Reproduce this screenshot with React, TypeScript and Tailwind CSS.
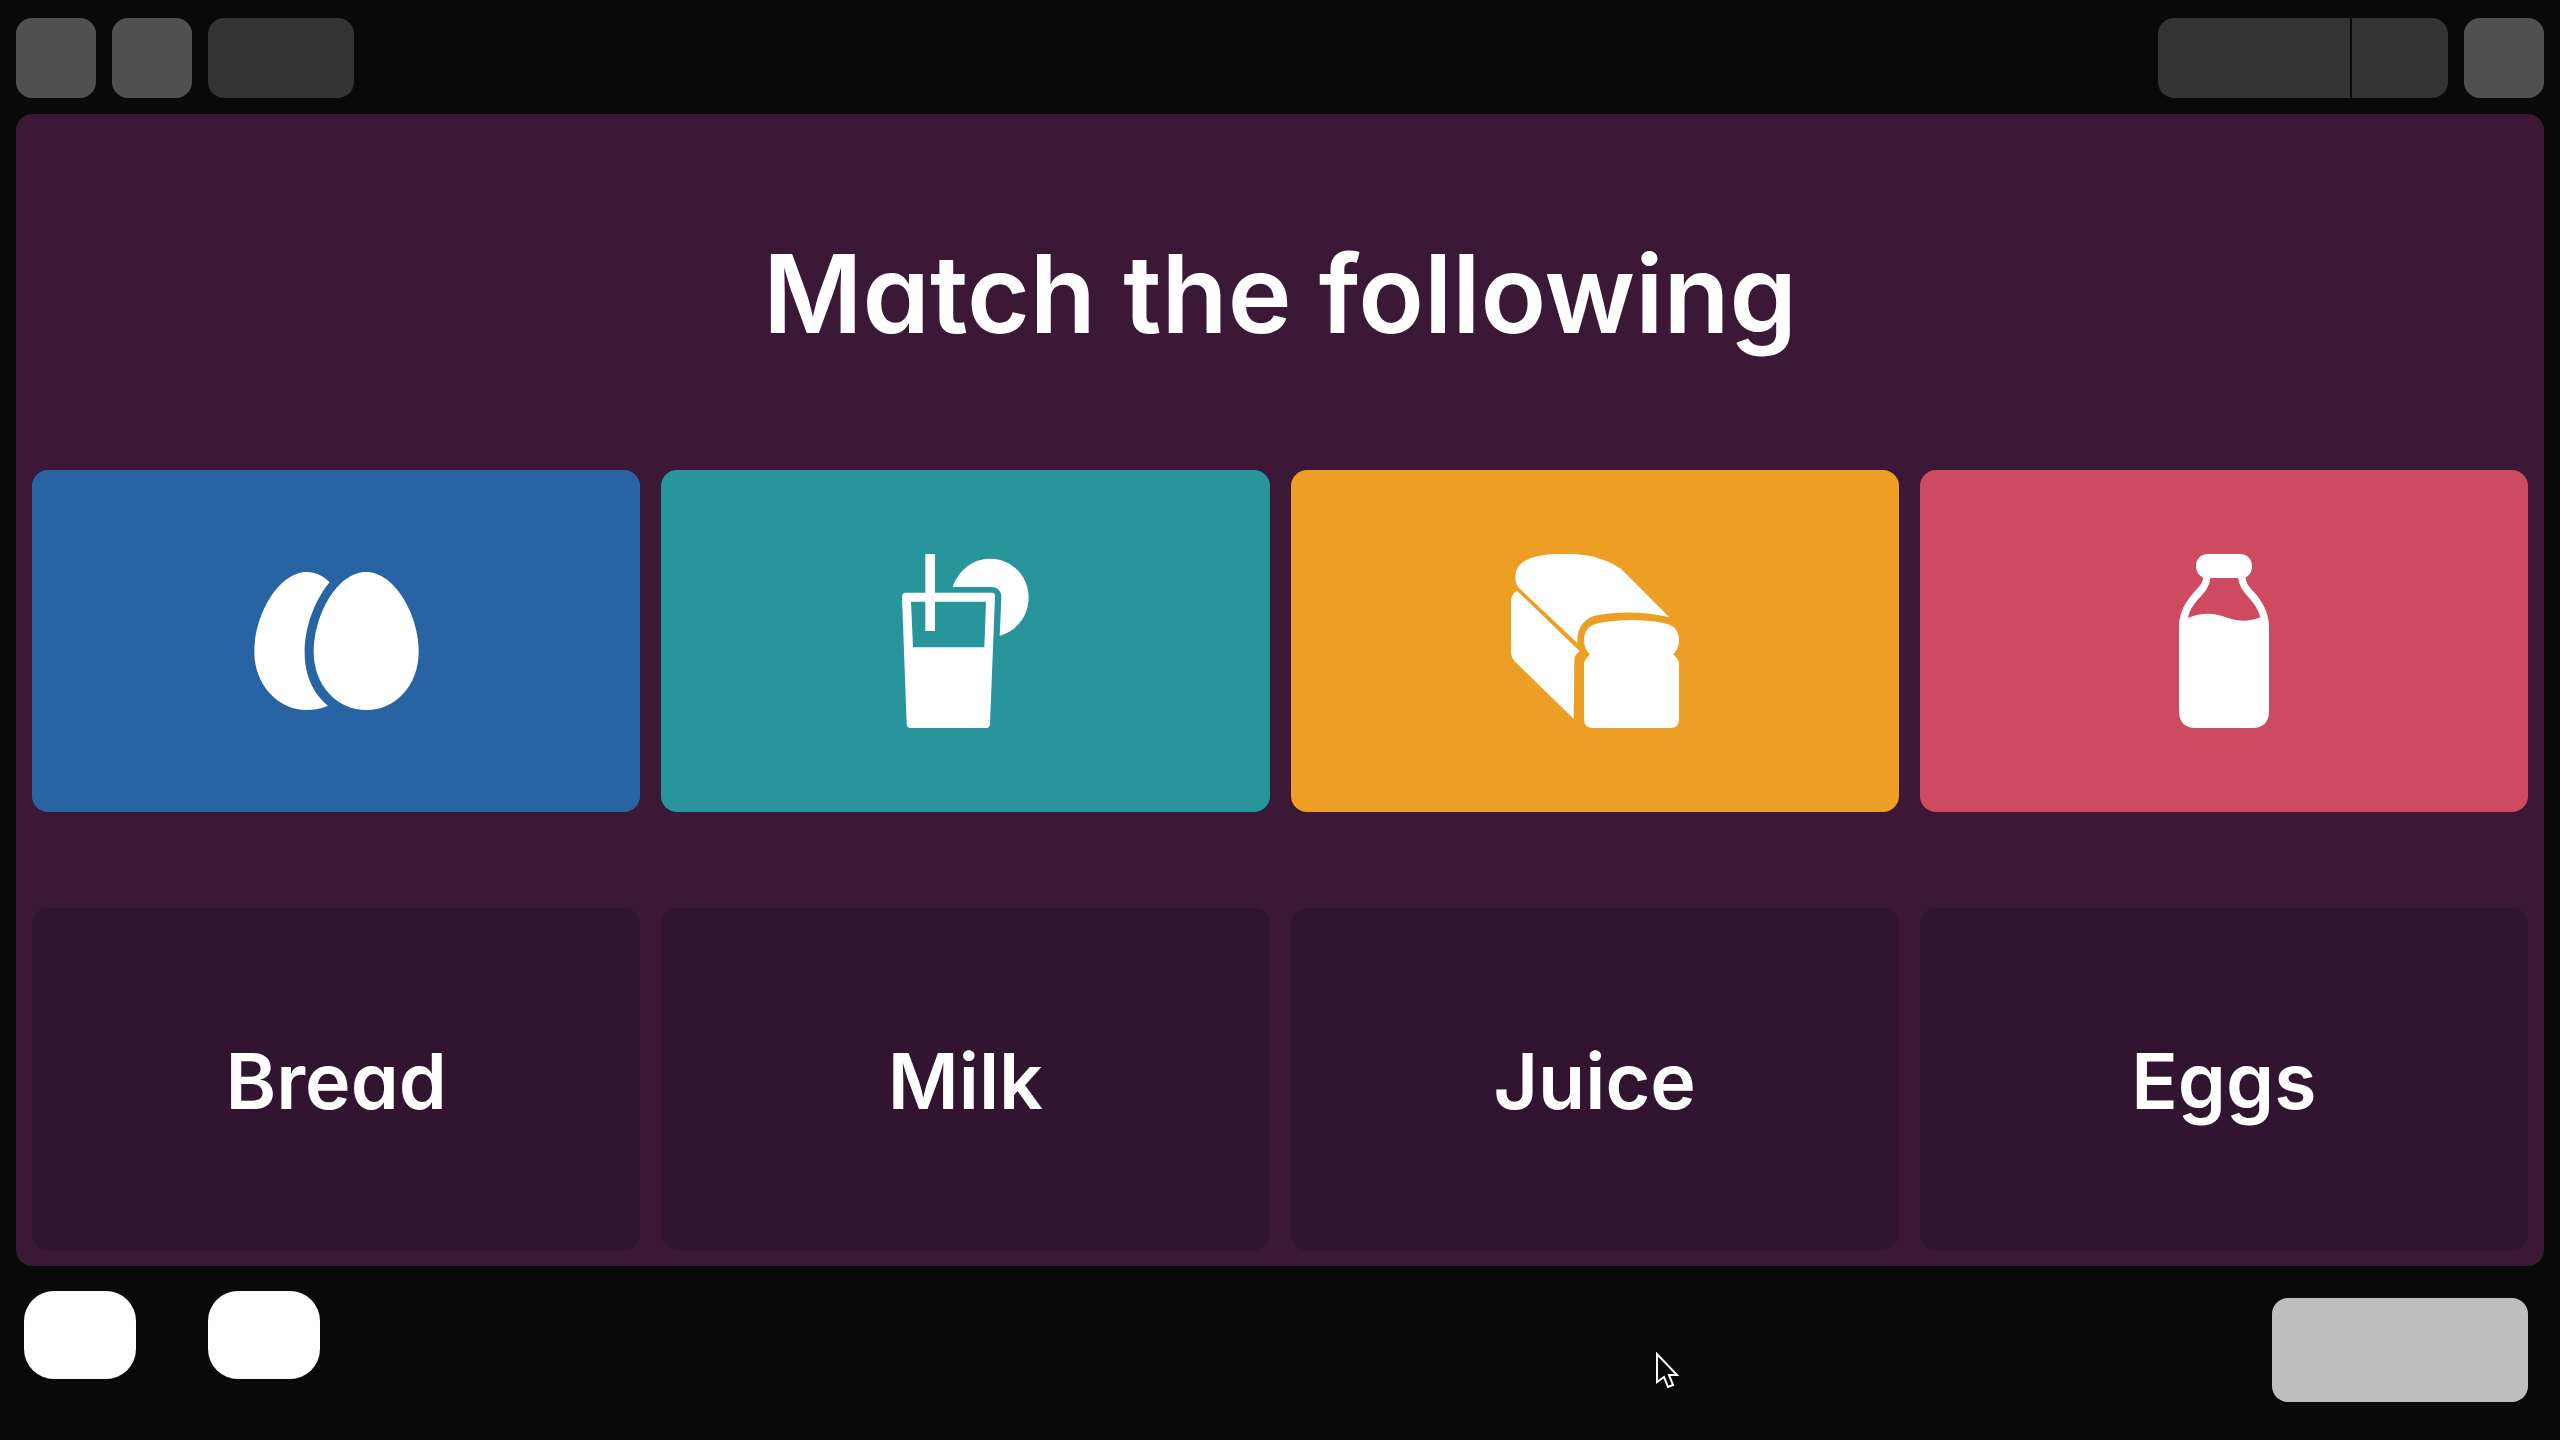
import type { ReactNode } from "react";

function EggsIcon() {
  return (
    <svg viewBox="70 96 495 414" className="h-[138px] w-[165px]" fill="#fff" aria-hidden="true">
      <path d="M297 127C278 108 254 96 229 96C143 96 71 225 71 335C71 438 146 510 228 510C250 510 272 506 292 497C249 462 222 407 222 338C222 264 250 183 297 127Z" />
      <path d="M406 96C492 96 564 225 564 335C564 438 492 510 407 510C321 510 249 438 249 335C249 225 320 96 406 96Z" />
    </svg>
  );
}

function JuiceIcon() {
  return (
    <svg viewBox="66 72 381 522" className="h-[174px] w-[127px]" fill="#fff" aria-hidden="true">
      <path
        fillRule="evenodd"
        d="M136 72H165V188H336Q346 188 345 199L330 583Q329 594 319 594H91Q81 594 80 583L66 200Q66 188 77 188H136ZM93 215L99 352H313L318 215H165V303H136V215Z"
      />
      <path d="M218 171C235 121 278 86 330 86C396 86 446 138 446 203C446 257 410 303 359 318L364 204C365 184 353 171 334 171Z" />
    </svg>
  );
}

function BreadIcon() {
  return (
    <svg viewBox="60 72 504 522" className="h-[174px] w-[168px]" fill="#fff" aria-hidden="true">
      <path d="M75 157C67 123 82 96 123 83C151 75 185 71 222 71C287 71 344 86 385 113C392 118 399 125 405 131L535 262C469 245 385 243 318 256C280 264 257 293 259 339L83 173Q77 167 75 157Z" />
      <path d="M78 182L266 364C256 371 250 378 250 390L248 566L72 395Q60 383 60 367V213Q60 193 78 182Z" />
      <path d="M279 329C279 305 292 287 316 281C382 266 462 266 527 281C551 287 564 305 564 329C564 349 557 362 546 373C558 384 564 391 564 406V568Q564 594 538 594H306Q279 594 279 567V405C279 391 286 385 297 373C286 362 279 349 279 329Z" />
    </svg>
  );
}

function MilkIcon() {
  return (
    <svg viewBox="84 72 270 522" className="h-[174px] w-[90px]" fill="#fff" aria-hidden="true">
      <path
        fillRule="evenodd"
        d="M171 72H267C289 72 303 88 303 108C303 124 296 136 284 142C285 159 294 171 307 184C334 213 354 250 354 290V543Q354 594 303 594H135Q84 594 84 543V290C84 248 104 215 131 184C145 170 154 160 157 143C143 137 135 124 135 108C135 88 149 72 171 72ZM178 144C176 164 168 178 153 195C133 216 116 237 111 264C155 245 194 249 234 265C266 276 299 274 328 262C321 237 308 218 289 198C274 182 264 164 261 144Z"
      />
    </svg>
  );
}

const pictures: { name: string; color: string; icon: ReactNode }[] = [
  { name: "Eggs picture", color: "bg-[#2864a4]", icon: <EggsIcon /> },
  { name: "Juice picture", color: "bg-[#28949c]", icon: <JuiceIcon /> },
  { name: "Bread picture", color: "bg-[#ec9f24]", icon: <BreadIcon /> },
  { name: "Milk picture", color: "bg-[#cd4a60]", icon: <MilkIcon /> },
];

const words = ["Bread", "Milk", "Juice", "Eggs"];

export default function App() {
  return (
    <div className="relative flex min-h-screen flex-col bg-[#090909] px-4 pt-[18px] font-['Inter',sans-serif] text-white [font-feature-settings:'cv11']">
      <header className="flex items-center justify-between">
        <div className="flex gap-4">
          <button aria-label="Menu" className="size-20 rounded-2xl bg-[#505050]" />
          <button aria-label="Full screen" className="size-20 rounded-2xl bg-[#505050]" />
          <button aria-label="Question number" className="h-20 w-[146px] rounded-2xl bg-[#333333]" />
        </div>
        <div className="flex gap-4">
          <div className="flex gap-0.5">
            <button aria-label="Score" className="h-20 w-48 rounded-l-2xl bg-[#333333]" />
            <button aria-label="Streak" className="h-20 w-24 rounded-r-2xl bg-[#333333]" />
          </div>
          <button aria-label="Settings" className="size-20 rounded-2xl bg-[#505050]" />
        </div>
      </header>

      <main className="mt-4 flex flex-1 flex-col rounded-2xl bg-[#3c1837] px-4 pb-4">
        <div className="flex flex-1 items-center justify-center pt-1">
          <h1 className="text-[108px] leading-none font-semibold">Match the following</h1>
        </div>
        <div className="grid grid-cols-4 gap-x-[21px] gap-y-24">
          {pictures.map((p) => (
            <button
              key={p.name}
              aria-label={p.name}
              className={`flex h-[342px] items-center justify-center rounded-2xl ${p.color}`}
            >
              {p.icon}
            </button>
          ))}
          {words.map((word) => (
            <button
              key={word}
              className="flex h-[342px] items-center justify-center rounded-2xl bg-[#311530] pt-1 text-[77px] leading-none font-semibold"
            >
              {word}
            </button>
          ))}
        </div>
      </main>

      <footer className="flex h-[174px] items-start justify-between px-2 pt-[25px]">
        <div className="flex gap-[72px]">
          <button aria-label="Player" className="h-[88px] w-28 rounded-[30px] bg-[#fefefe]" />
          <button aria-label="Power-up" className="h-[88px] w-28 rounded-[30px] bg-[#fefefe]" />
        </div>
        <button aria-label="Submit" className="mt-[7px] mr-2 h-[104px] w-64 rounded-2xl bg-[#bebebe]" />
      </footer>

      <svg
        viewBox="0 0 24 37"
        className="pointer-events-none absolute top-[1352px] left-[1656px] h-[37px] w-6"
        fill="#090909"
        stroke="#fff"
        strokeWidth="2"
        aria-hidden="true"
      >
        <path d="M1 2V30L8 25L12 35L17 33L13 23H21Z" />
      </svg>
    </div>
  );
}
